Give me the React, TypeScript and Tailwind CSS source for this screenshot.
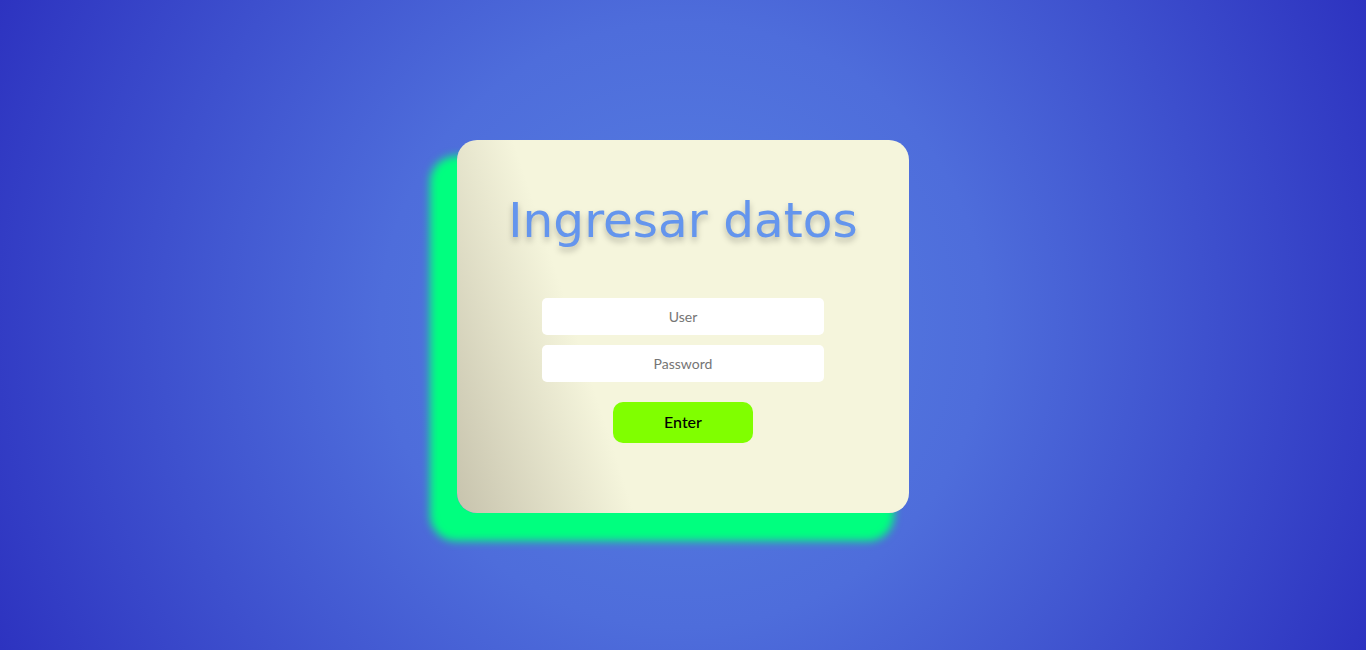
import React from "react";

export default function App() {
  return (
    <div className="w-full h-[650px] flex items-center justify-center pt-[2px] bg-[radial-gradient(circle_farthest-corner,#5780e2_0%,#4e6ddb_40%,#2d33c0_100%)]">
      <div className="w-[452px] h-[373px] rounded-[20px] flex flex-col items-center pt-[52px] bg-[linear-gradient(72deg,#c7c3ad_0%,#f5f5dc_31%,#f5f5dc_100%)] shadow-[-21px_22px_8px_6px_#00ff7f]">
        <h1 className="text-[48.5px] leading-[56px] text-[#6495ed] font-['DejaVu_Sans',Verdana,sans-serif] [text-shadow:0_4px_6px_rgba(0,0,0,0.25)]">
          Ingresar datos
        </h1>
        <form className="flex flex-col items-center mt-[50px]" onSubmit={(e) => e.preventDefault()}>
          <input
            type="text"
            placeholder="User"
            className="w-[282px] h-[37px] rounded-[5px] bg-white text-center text-[14px] font-['Lato',sans-serif] placeholder:text-[#757575] outline-none"
          />
          <input
            type="password"
            placeholder="Password"
            className="w-[282px] h-[37px] mt-[10px] rounded-[5px] bg-white text-center text-[14px] font-['Lato',sans-serif] placeholder:text-[#757575] outline-none"
          />
          <button
            type="submit"
            className="w-[140px] h-[41px] mt-[20px] rounded-[10px] bg-[#80ff00] text-black text-[16px] font-medium font-['Lato',sans-serif]"
          >
            Enter
          </button>
        </form>
      </div>
    </div>
  );
}
